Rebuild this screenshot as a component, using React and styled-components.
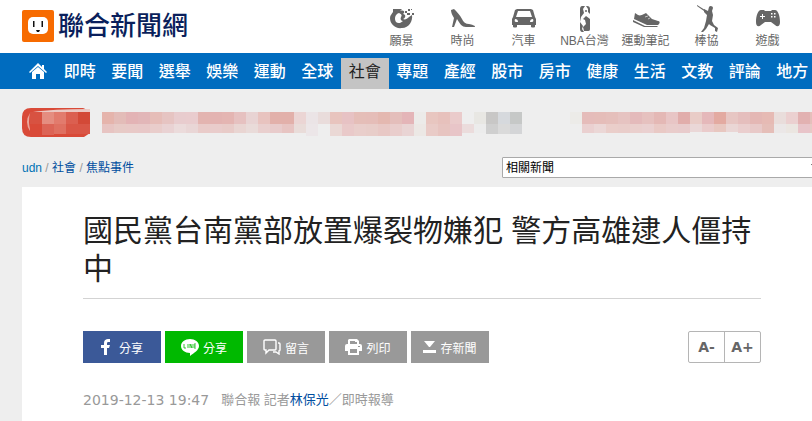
import React from 'react';
import styled, { createGlobalStyle } from 'styled-components';

const GlobalStyle = createGlobalStyle`
  * {
    box-sizing: border-box;
  }

  body {
    margin: 0;
    background-color: #eee;
    font-family: "Liberation Sans", "Noto Sans CJK TC", sans-serif;
    font-size: 12px;
    overflow: hidden;
  }

  a {
    text-decoration: none;
  }
`;

const Page = styled.div`
  display: flex;
  flex-direction: column;
  min-height: 100vh;
  overflow: hidden;
`;

const Header = styled.header`
  display: flex;
  justify-content: space-between;
  align-items: flex-start;
  height: 53px;
  padding: 0 14px 0 22px;
  background-color: #fff;
`;

const Logo = styled.a`
  display: flex;
  align-items: center;
  gap: 4px;
  margin-top: 10px;
  height: 32px;
  color: #0a1f5c;
  font-size: 26px;
  font-weight: 500;
  line-height: 32px;
  white-space: nowrap;
`;

const Channels = styled.nav`
  display: flex;
  padding-top: 5px;
`;

const Channel = styled.a`
  display: flex;
  flex-direction: column;
  align-items: center;
  width: 61px;
  color: #666;
  line-height: 16px;
  white-space: nowrap;

  svg {
    fill: #666;
  }
`;

const NavBar = styled.nav`
  display: flex;
  align-items: stretch;
  height: 36px;
  padding-left: 22px;
  background-color: #006cbf;
  overflow: hidden;
`;

const HomeLink = styled.a`
  display: flex;
  flex: none;
  align-items: center;
  justify-content: center;
  width: 32px;
`;

const NavList = styled.div`
  display: grid;
  grid-template-columns: repeat(16, 1fr);
  flex: 1;
  margin-right: -4px;
  padding: 5px 0 0 2px;
`;

const NavItem = styled.a`
  color: ${(props) => (props.$active ? '#222' : '#fff')};
  background-color: ${(props) => (props.$active ? '#c4c4c4' : 'transparent')};
  font-size: 16px;
  font-weight: ${(props) => (props.$active ? 400 : 500)};
  line-height: 28px;
  text-align: center;
  white-space: nowrap;
`;

const HotRow = styled.div`
  height: 29px;
  margin: 19px 0 20px 22px;
  overflow: hidden;

  svg {
    display: block;
  }
`;

const PathRow = styled.div`
  display: flex;
  justify-content: space-between;
  align-items: center;
  height: 21px;
  margin: 0 0 9px 22px;
`;

const Breadcrumb = styled.nav`
  color: #999;
  line-height: 20px;

  a {
    color: #004e9f;
  }

  a:first-child {
    color: #0072b5;
  }
`;

const SelectWrap = styled.div`
  display: flex;
  position: relative;
  flex: none;
  width: 320px;
  margin-right: -10px;

  svg {
    position: absolute;
    top: 7px;
    right: 3px;
  }
`;

const TopicSelect = styled.select`
  appearance: none;
  width: 100%;
  height: 21px;
  padding: 0 3px;
  border: 1px solid #a9a9a9;
  border-radius: 1px;
  background-color: #fff;
  color: #000;
  font-family: inherit;
  font-size: 12px;
`;

const Article = styled.main`
  flex: 1;
  margin-left: 22px;
  padding: 25px 51px 0 61px;
  background-color: #fff;
`;

const Title = styled.h1`
  margin: 0;
  padding-bottom: 10px;
  border-bottom: 1px solid #d3d3d3;
  color: #222;
  font-size: 30px;
  font-weight: 400;
  line-height: 38px;
`;

const Tools = styled.div`
  display: flex;
  justify-content: space-between;
  margin-top: 32px;
`;

const ShareList = styled.div`
  display: flex;
  gap: 4px;
`;

const ShareButton = styled.button`
  display: flex;
  align-items: center;
  justify-content: center;
  gap: ${(props) => props.$gap || 4}px;
  width: 78px;
  height: 32px;
  padding: 0;
  border: 0;
  background-color: ${(props) => props.$color || '#999'};
  color: #fff;
  font-family: inherit;
  font-size: 12px;
  white-space: nowrap;
  cursor: pointer;
`;

const FontSizer = styled.div`
  display: flex;
  width: 73px;
  height: 32px;
  border: 1px solid #b5b5b5;
  border-radius: 2px;
`;

const SizeButton = styled.button`
  flex: 1;
  padding: 0;
  border: 0;
  background: none;
  color: #666;
  font-family: "DejaVu Sans", sans-serif;
  font-size: 14px;
  font-weight: bold;
  cursor: pointer;

  & + & {
    border-left: 1px solid #b5b5b5;
  }
`;

const Meta = styled.p`
  display: flex;
  gap: 12px;
  margin: 27px 0 0;
  color: #999;
  font-size: 13px;
  line-height: 20px;

  time {
    font-family: "DejaVu Sans", sans-serif;
    font-size: 14px;
  }

  a {
    color: #004e9f;
  }
`;

const VisionIcon = () => (
  <svg width="26" height="28" viewBox="0 0 26 28" aria-hidden="true">
    <path fillRule="evenodd" d="M4 4h9l-2 2c3-1 5 0 4 2l-1 1c3 0 3 4 0 5 2 1 4 0 6-2l3-2c1 6-3 13-10 13C6 24 1 19 1 13c0-3 2-4 3-6zM10 8c-4 1-5 6-3 9 2 2 5 1 7-1-2 0-3-2-2-4 1-1 1-3-2-4z" />
    <path d="M16 6h2v2h-2zM19 4h2v2h-2zM18 8h3v2h-3zM23 8h2v2h-2zM22 4h1v1h-1z" />
  </svg>
);

const HeelIcon = () => (
  <svg width="26" height="28" viewBox="0 0 26 28" aria-hidden="true">
    <path d="M4 4c2 2 6 6 8 10 1 3 4 5 7 5 3 1 6 1 6 3H16c-4 0-6-3-9-8L4 22H2l2-9C2 10 1 7 1 5z" />
  </svg>
);

const CarIcon = () => (
  <svg width="26" height="28" viewBox="0 0 26 28" aria-hidden="true">
    <path fillRule="evenodd" d="M6 4h14l2 1 2 7 1 2v6h-1v2q-2 1-4 0v-2H6v2q-2 1-4 0v-2H1v-6l1-2 2-7zM7 6l-2 6h16l-2-6zM4 14q-1 3 1 3h2q0-3-3-3zM19 17h2q2 0 1-3-3 0-3 3z" />
  </svg>
);

const NbaIcon = () => (
  <svg width="26" height="28" viewBox="0 0 26 28" aria-hidden="true">
    <path d="M10 1h3l-2 3 1 4-3 4-1 5 3 4-1 3 2 3h-2c-1 0-2-1-2-3V4c0-2 1-3 2-3zM14 1h1c2 0 3 1 3 3v5l-2-2V4zM14 11l4 3v10c0 2-1 2-3 2h-3l-1-4 3-3-1-4-2-1z" />
    <circle cx="14" cy="6" r="1" />
  </svg>
);

const ShoeIcon = () => (
  <svg width="28" height="28" viewBox="0 0 28 28" aria-hidden="true">
    <path d="M3 8l3 2c2 1 4 0 6-1l2-1 6 6c2 1 4 1 6 2 2 0 2 2 1 3l-1 1H15L2 14z" />
    <path d="M1 15l12 6h13l-1 1H12L1 17z" />
    <path d="M13 12l3-1M16 14l2-1" stroke="#fff" strokeWidth=".6" fill="none" />
  </svg>
);

const BatterIcon = () => (
  <svg width="26" height="28" viewBox="0 0 26 28" aria-hidden="true">
    <path d="M3 0l8 5-1 1L3 1z" />
    <path d="M10 4l4 2 1-4c1-2 4-1 4 1l-1 3 1 4-1 6 2 4 4 3-1 4-2-1v-3l-5-3-1-1-3 5-3 3H7l3-4 2-7 1-6-3-3z" />
  </svg>
);

const GameIcon = () => (
  <svg width="26" height="28" viewBox="0 0 26 28" aria-hidden="true">
    <path d="M6 5h3l1 1h6l1-1h3c3 0 5 6 5 12 0 5-3 5-5 3l-4-3h-6l-4 3c-2 2-5 2-5-3C1 11 3 5 6 5z" />
    <path d="M7 9h1v2h2v1H8v2H7v-2H5v-1h2z" fill="#fff" />
    <path d="M16 8h1.500v1.500h-1.500zM19 8h1.500v1.500h-1.500zM16 11h1.500v1.500h-1.500zM19 11h1.500v1.500h-1.500z" fill="#fff" />
  </svg>
);

const HomeIcon = () => (
  <svg width="18" height="16" viewBox="0 0 18 16" fill="#fff" aria-hidden="true">
    <path d="M9 0l4 4V2h2v4l3 3-1 1-8-7-8 7-1-1z" />
    <path d="M9 4l6 5v7h-4v-5H7v5H3V9z" />
  </svg>
);

const FacebookIcon = () => (
  <svg width="10" height="16" viewBox="0 0 10 16" fill="#fff" aria-hidden="true">
    <path d="M3 16V9H0V6h3V4c0-3 2-4 4-4h2v3H7C6 3 6 4 6 5v1h3L8 9H6v7z" />
  </svg>
);

const LineIcon = () => (
  <svg width="18" height="18" viewBox="0 0 18 18" aria-hidden="true">
    <path d="M9 1c5 0 9 3 9 7 0 4-5 7-9 10v-3c-5 0-9-3-9-7 0-4 4-7 9-7z" fill="#fff" />
    <path d="M3 6v4h2M7 6v4M9 10V6l2 4V6M15 6h-2v4h2M13 8h2" stroke="#00b900" strokeWidth=".8" fill="none" />
  </svg>
);

const CommentIcon = () => (
  <svg width="18" height="16" viewBox="0 0 18 16" fill="none" stroke="#fff" strokeWidth="1.4" aria-hidden="true">
    <path d="M2 1h10q1 0 1 1v8q0 1-1 1H6l-3 3v-3H2q-1 0-1-1V2q0-1 1-1z" />
    <path d="M15 4h1q1 0 1 1v6q0 1-1 1v3l-3-2h-3" />
  </svg>
);

const PrintIcon = () => (
  <svg width="17" height="16" viewBox="0 0 17 16" fill="#fff" aria-hidden="true">
    <path fillRule="evenodd" d="M4 0h8l2 2v3h1q2 0 2 2v5h-3v4H3v-4H0V7q0-2 2-2h1V1zM5 2v3h7V3h-2V2zM5 10v4h7v-4zM13 7v1h2V7z" />
  </svg>
);

const SaveIcon = () => (
  <svg width="13" height="12" viewBox="0 0 13 12" fill="#fff" aria-hidden="true">
    <path d="M1 0h11L7 6H6zM0 9h13v3H0z" />
  </svg>
);

const channels = [
  { name: '願景', Icon: VisionIcon },
  { name: '時尚', Icon: HeelIcon },
  { name: '汽車', Icon: CarIcon },
  { name: 'NBA台灣', Icon: NbaIcon },
  { name: '運動筆記', Icon: ShoeIcon },
  { name: '棒協', Icon: BatterIcon },
  { name: '遊戲', Icon: GameIcon },
];

const sections = [
  '即時', '要聞', '選舉', '娛樂', '運動', '全球', '社會', '專題',
  '產經', '股市', '房市', '健康', '生活', '文教', '評論', '地方',
];

// one colour per 12px tile, null leaves the background
const topTiles = [
  '#e5b4ac', '#e3bcb8', '#e3b3b5', '#e2b6b8', '#e6bdb8', '#e6c4c2', '#e8ccce', '#e9ccce',
  '#e3b4b0', '#e3b3b1', '#e4b5b2', '#e6c1c0', '#e8d3d3', '#e8c3bf', '#e2b0aa', '#e2b0aa',
  '#ebd5d4', '#ebe4e6', '#e9dcdb', '#e8c4be', '#e7c2c4', '#e5beb8', '#e5bdb8', '#e4b8b0',
  '#e4bebb', '#e4b5b8', '#ecebe9', '#e8c6c0', '#e7c1bc', '#eacbcb', null, '#e8e7e3',
  '#c8c7c6', '#d6d9dd', '#c6c8c7', null, null, null, null, '#ecebe8',
  '#e5bcba', '#e5bdb9', '#e5bfbb', '#e6c3c1', '#e4babb', '#e6c1bf', '#e4b8b5', '#e8c5c5',
  '#e1adab', '#e9ccc7', '#e5b8ba', '#e3aaa1', '#e7c6c3', '#e5bebd', '#e4b7b4', '#e6bab4',
  '#e9dddb', '#ebd0d0', '#e2b1b1', '#e5bfbb',
];

const bottomTiles = [
  '#e7c4c2', '#e7cac6', '#e8c9c7', '#e8c8c8', '#e9cdcb', '#e9d2d3', '#ebdbdb', '#e9d6d6',
  '#e9cbc9', '#e9cccb', '#e8cbc8', '#e9d5d2', '#e9dbd9', '#e9cfce', '#e8cbcb', '#e7c4c2',
  '#e9dcd9', '#ece6e8', null, '#ead8d5', '#e9c9c9', '#e9cecb', '#e8cdc9', '#e8c8c5',
  '#e9cdcc', '#e9d4d4', '#ece8e5', '#e9cbc7', '#e7c4c0', '#e8c5c8', '#ebdcdc', '#ececec',
  '#cfcfcf', '#dadada', '#d4d5d7', null, null, null, null, null,
  '#ead0d0', '#ebd7d6', '#eaceca', '#e9cdca', '#eacfcd', '#ead0d0', '#e9c9c5', '#e9cccb',
  '#e8cbcc', '#ead7d7', '#eacbcb', '#e8c7c0', '#ead6d5', '#eacece', '#e8c9c8', '#e5beb8',
  '#ebe7e7', '#ebe6e1', '#e8c4c9', '#e7cac6',
];

const tileHeight = (i) => {
  if (i > 16 && i < 30) return 12;
  if (i > 31 && i < 35) return 10;
  return i > 48 && i < 53 ? 8 : 9;
};

const HotBanner = () => (
  <svg width="822" height="29" viewBox="0 0 822 29" shapeRendering="crispEdges" aria-hidden="true">
    <path d="M9 0H61L68 3V25L62 29H9Q0 29 0 20V9Q0 0 9 0z" fill="#d94a38" shapeRendering="auto" />
    <path d="M11 4Q30 1 68 1V4z" fill="#ebc9c4" shapeRendering="auto" />
    <path d="M8 5Q2 14 8 23V21Q6 14 8 5z" fill="#eba69c" shapeRendering="auto" />
    <path d="M8 4h12v12H8z" fill="#d85241" />
    <path d="M20 4h12v12H20z" fill="#e58d80" />
    <path d="M32 4h12v12H32z" fill="#e27b6d" />
    <path d="M44 4h12v12H44z" fill="#db5f50" />
    <path d="M56 4h12v12H56z" fill="#d34937" />
    <path d="M20 16h12v11H20z" fill="#dc6456" />
    <path d="M32 16h12v10H32z" fill="#df7061" />
    <path d="M44 16h24v10H44z" fill="#d95646" />
    {topTiles.map((color, i) => color && (
      <rect key={i} x={80 + i * 12} y="4" width="12" height="12" fill={color} />
    ))}
    {bottomTiles.map((color, i) => color && (
      <rect key={i} x={80 + i * 12} y="16" width="12" height={tileHeight(i)} fill={color} />
    ))}
  </svg>
);

const App = () => {
  return (
    <Page>
      <GlobalStyle />
      <Header>
        <Logo href="#">
          <svg width="32" height="32" viewBox="0 0 32 32" aria-hidden="true">
            <rect width="32" height="32" rx="2" fill="#f76b00" />
            <rect x="6" y="7" width="20" height="17" rx="5" fill="#fff" />
            <path d="M11 11h1.500v6h-1.500zM19.500 11h1.500v6h-1.500zM14 20h4l-1 2h-2z" fill="#111" />
          </svg>
          聯合新聞網
        </Logo>
        <Channels>
          {channels.map(({ name, Icon }) => (
            <Channel href="#" key={name}>
              <Icon />
              {name}
            </Channel>
          ))}
        </Channels>
      </Header>

      <NavBar>
        <HomeLink href="#" aria-label="udn">
          <HomeIcon />
        </HomeLink>
        <NavList>
          {sections.map((name) => (
            <NavItem href="#" key={name} $active={name === '社會'}>{name}</NavItem>
          ))}
        </NavList>
      </NavBar>

      <HotRow>
        <HotBanner />
      </HotRow>

      <PathRow>
        <Breadcrumb>
          <a href="#">udn</a> / <a href="#">社會</a> / <a href="#">焦點事件</a>
        </Breadcrumb>
        <SelectWrap>
          <TopicSelect aria-label="相關新聞">
            <option>相關新聞</option>
          </TopicSelect>
          <svg width="8" height="6" viewBox="0 0 8 6" aria-hidden="true">
            <path d="M0 0h8L4 5z" fill="#222" />
          </svg>
        </SelectWrap>
      </PathRow>

      <Article>
        <Title>國民黨台南黨部放置爆裂物嫌犯 警方高雄逮人僵持中</Title>
        <Tools>
          <ShareList>
            <ShareButton $color="#3b5998" $gap={8}><FacebookIcon />分享</ShareButton>
            <ShareButton $color="#00b900"><LineIcon />分享</ShareButton>
            <ShareButton><CommentIcon />留言</ShareButton>
            <ShareButton><PrintIcon />列印</ShareButton>
            <ShareButton><SaveIcon />存新聞</ShareButton>
          </ShareList>
          <FontSizer>
            <SizeButton>A-</SizeButton>
            <SizeButton>A+</SizeButton>
          </FontSizer>
        </Tools>
        <Meta>
          <time>2019-12-13 19:47</time>
          <span>聯合報 記者<a href="#">林保光</a>／即時報導</span>
        </Meta>
      </Article>
    </Page>
  );
};

export default App;
